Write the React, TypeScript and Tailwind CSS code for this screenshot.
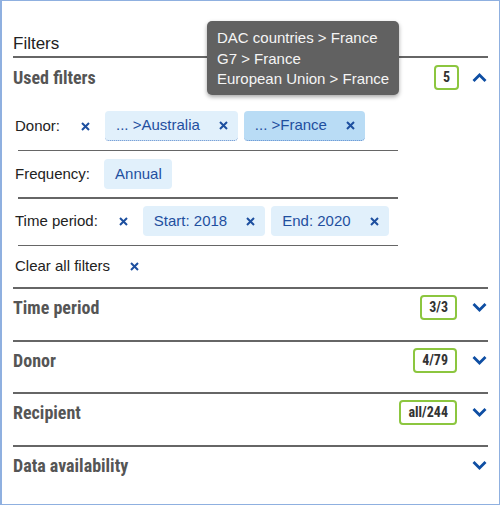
import React from "react";

const narrow = { fontFamily: '"Liberation Sans Narrow", "Roboto Condensed", "Liberation Sans", sans-serif' };

function XIcon() {
  return (
    <svg width="9" height="9" viewBox="0 0 9 9" className="shrink-0">
      <path d="M1 1 L8 8 M8 1 L1 8" stroke="#1d4f9f" strokeWidth="2" strokeLinecap="butt" />
    </svg>
  );
}

function Chevron({ up }: { up?: boolean }) {
  return (
    <svg width="15" height="9" viewBox="0 0 15 9" className="shrink-0">
      <path d={up ? "M1.5 8 L7.5 2 L13.5 8" : "M1.5 1 L7.5 7 L13.5 1"} stroke="#0e4ea3" strokeWidth="2.8" fill="none" />
    </svg>
  );
}

function Badge({ text }: { text: string }) {
  return (
    <div
      className="h-[25px] px-[7px] border-2 border-[#8cc63f] rounded-[4px] flex items-center justify-center text-[14px] font-bold text-[#333]"
      style={narrow}
    >
      {text}
    </div>
  );
}

function Chip({ text, x, dark, dotted }: { text: string; x?: boolean; dark?: boolean; dotted?: boolean }) {
  return (
    <div
      className={
        "h-[30px] pl-[11px] pr-[10px] flex items-center gap-[19px] rounded-[4px] text-[15px] text-[#1f4f9f] " +
        (dark ? "bg-[#b9dcf5] " : "bg-[#e1f0fb] ") +
        (dotted ? "border-b border-dotted border-[#5a88cc]" : "")
      }
    >
      <span>{text}</span>
      {x && <XIcon />}
    </div>
  );
}

function Section({ title, badge, h }: { title: string; badge?: string; h: string }) {
  return (
    <div className={"border-t-2 border-[#666] " + h}>
      <div className="h-[37px] flex items-center">
        <div className="flex-1 text-[18px] font-bold text-[#555]" style={narrow}>
          {title}
        </div>
        {badge && <Badge text={badge} />}
        <div className="ml-[15px] mr-[1px] flex items-center">
          <Chevron />
        </div>
      </div>
    </div>
  );
}

export default function App() {
  return (
    <div
      className="relative w-[500px] h-[505px] bg-white border-t border-r border-b border-l-2 border-[#8fb0e0] pl-[11px] pr-[11px] text-[#222]"
      style={{ fontFamily: '"Liberation Sans", Arial, sans-serif' }}
    >
      <div className="pt-[32px] text-[17px] leading-[22px] border-b-2 border-[#666] pb-[1px]">Filters</div>
      <div className="h-[38px] flex items-center">
        <div className="flex-1 text-[18px] font-bold text-[#555]" style={narrow}>
          Used filters
        </div>
        <Badge text="5" />
        <div className="ml-[13px] mr-[1px] flex items-center">
          <Chevron up />
        </div>
      </div>

      <div className="pl-[2px] text-[15px]">
        <div className="flex items-center pt-[15px] pb-[9px]">
          <span className="mr-[21px]">Donor:</span>
          <span className="mr-[15px] flex"><XIcon /></span>
          <div className="flex gap-[6px]">
            <Chip text="... >Australia" x dotted />
            <Chip text="... >France" x dark dotted />
          </div>
        </div>
        <div className="ml-[3px] w-[380px] border-t border-[#666]" />
        <div className="flex items-center pt-[8px] pb-[8px]">
          <span className="mr-[14px]">Frequency:</span>
          <Chip text="Annual" />
        </div>
        <div className="ml-[3px] w-[380px] border-t-2 border-[#666]" />
        <div className="flex items-center pt-[7px] pb-[9px]">
          <span className="mr-[21px]">Time period:</span>
          <span className="mr-[15px] flex"><XIcon /></span>
          <div className="flex gap-[6px]">
            <Chip text="Start: 2018" x />
            <Chip text="End: 2020" x />
          </div>
        </div>
        <div className="ml-[3px] w-[380px] border-t border-[#666]" />
        <div className="h-[41px] flex items-center">
          <span className="mr-[20px]">Clear all filters</span>
          <XIcon />
        </div>
      </div>

      <Section title="Time period" badge="3/3" h="h-[53px]" />
      <Section title="Donor" badge="4/79" h="h-[52px]" />
      <Section title="Recipient" badge="all/244" h="h-[53px]" />
      <Section title="Data availability" h="h-[50px]" />

      <div className="absolute left-[205px] top-[20px] w-[192px] h-[74px] bg-[#616161] rounded-[5px] shadow-[0_2px_4px_rgba(0,0,0,0.35)] pl-[10px] pt-[7px] text-[15px] leading-[20.5px] text-[#f5f5f5]">
        <div>DAC countries &gt; France</div>
        <div>G7 &gt; France</div>
        <div>European Union &gt; France</div>
      </div>
    </div>
  );
}
